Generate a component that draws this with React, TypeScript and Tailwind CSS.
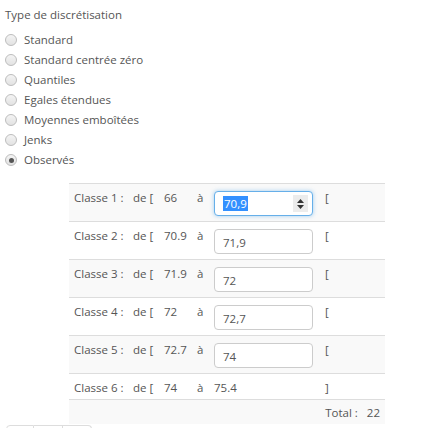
import React from "react";

const methods = [
  "Standard",
  "Standard centrée zéro",
  "Quantiles",
  "Egales étendues",
  "Moyennes emboîtées",
  "Jenks",
  "Observés",
];

const classes = [
  { n: 1, from: "66", to: "70,9", open: true, focused: true },
  { n: 2, from: "70.9", to: "71,9", open: true },
  { n: 3, from: "71.9", to: "72", open: true },
  { n: 4, from: "72", to: "72,7", open: true },
  { n: 5, from: "72.7", to: "74", open: true },
  { n: 6, from: "74", to: "75.4", open: false },
];

function Radio({ checked }: { checked?: boolean }) {
  return (
    <span className="w-[12px] h-[12px] rounded-full border border-[#bdbdbd] bg-gradient-to-b from-[#f4f4f4] to-[#e2e2e2] flex items-center justify-center shrink-0">
      {checked && <span className="w-[5px] h-[5px] rounded-full bg-[#555]" />}
    </span>
  );
}

function Spinner() {
  return (
    <span className="w-[15px] h-[17px] bg-[#ececec] flex flex-col items-center justify-center gap-[2px]">
      <svg width="7" height="4" viewBox="0 0 7 4">
        <path d="M0 4 L3.5 0 L7 4 Z" fill="#333" />
      </svg>
      <svg width="7" height="4" viewBox="0 0 7 4">
        <path d="M0 0 L3.5 4 L7 0 Z" fill="#333" />
      </svg>
    </span>
  );
}

export default function App() {
  return (
    <div className="w-[434px] h-[428px] overflow-hidden bg-white text-[11.5px] text-[#555] font-['Open_Sans',sans-serif]">
      <div className="pl-[5px] pt-[6px] leading-[17px]">Type de discrétisation</div>
      <div className="pl-[5px] pt-[7px] flex flex-col">
        {methods.map((m, i) => (
          <label key={m} className="flex items-center gap-[7px] h-[20px]">
            <Radio checked={i === methods.length - 1} />
            <span>{m}</span>
          </label>
        ))}
      </div>

      <table className="ml-[69px] mt-[13px] w-[316px] border-collapse table-fixed leading-[16px]">
        <colgroup>
          <col className="w-[59px]" />
          <col className="w-[31px]" />
          <col className="w-[33px]" />
          <col className="w-[17px]" />
          <col className="w-[111px]" />
          <col />
        </colgroup>
        <tbody>
          {classes.map(c => (
            <tr key={c.n} className={`border-t border-[#dddddd] align-top ${c.n % 2 ? "bg-[#f9f9f9]" : "bg-white"}`}>
              <td className="pl-[5px] pt-[6px] pb-[3px] whitespace-nowrap">Classe {c.n} :</td>
              <td className="pl-[5px] pt-[6px] pb-[3px] whitespace-nowrap">de [</td>
              <td className="pl-[5px] pt-[6px] pb-[3px]">{c.from}</td>
              <td className="pl-[5px] pt-[6px] pb-[3px]">à</td>
              <td className="pl-[5px] pt-[6px] pb-[3px]">
                {c.n === 6 ? (
                  <span>{c.to}</span>
                ) : (
                  <div
                    className={`mt-[1px] mb-[2px] w-[99px] h-[25px] rounded-[4px] bg-white flex items-center pl-[8px] pr-[4px] ${
                      c.focused
                        ? "border border-[#66afe9] shadow-[0_0_4px_rgba(102,175,233,0.6)]"
                        : "border border-[#cccccc]"
                    }`}
                  >
                    {c.focused ? (
                      <>
                        <span className="bg-[#3390ff] text-white leading-[15px] px-[1px]">{c.to}</span>
                        <span className="flex-1" />
                        <Spinner />
                      </>
                    ) : (
                      <span className="pt-[3px]">{c.to}</span>
                    )}
                  </div>
                )}
              </td>
              <td className="pl-[5px] pt-[6px] pb-[3px]">{c.open ? "[" : "]"}</td>
            </tr>
          ))}
          <tr className="border-t border-[#dddddd] bg-[#f9f9f9]">
            <td colSpan={6} className="pt-[5px] pb-[3px] pr-[5px] text-right">
              Total :<span className="pl-[9px]">22</span>
            </td>
          </tr>
        </tbody>
      </table>

      <div className="ml-[6px] mt-[1px] flex">
        <div className="w-[28px] h-[20px] border border-[#dddddd] rounded-l-[4px]" />
        <div className="w-[29px] h-[20px] border border-l-0 border-[#dddddd]" />
        <div className="w-[29px] h-[20px] border border-l-0 border-[#dddddd] rounded-r-[4px]" />
      </div>
    </div>
  );
}
